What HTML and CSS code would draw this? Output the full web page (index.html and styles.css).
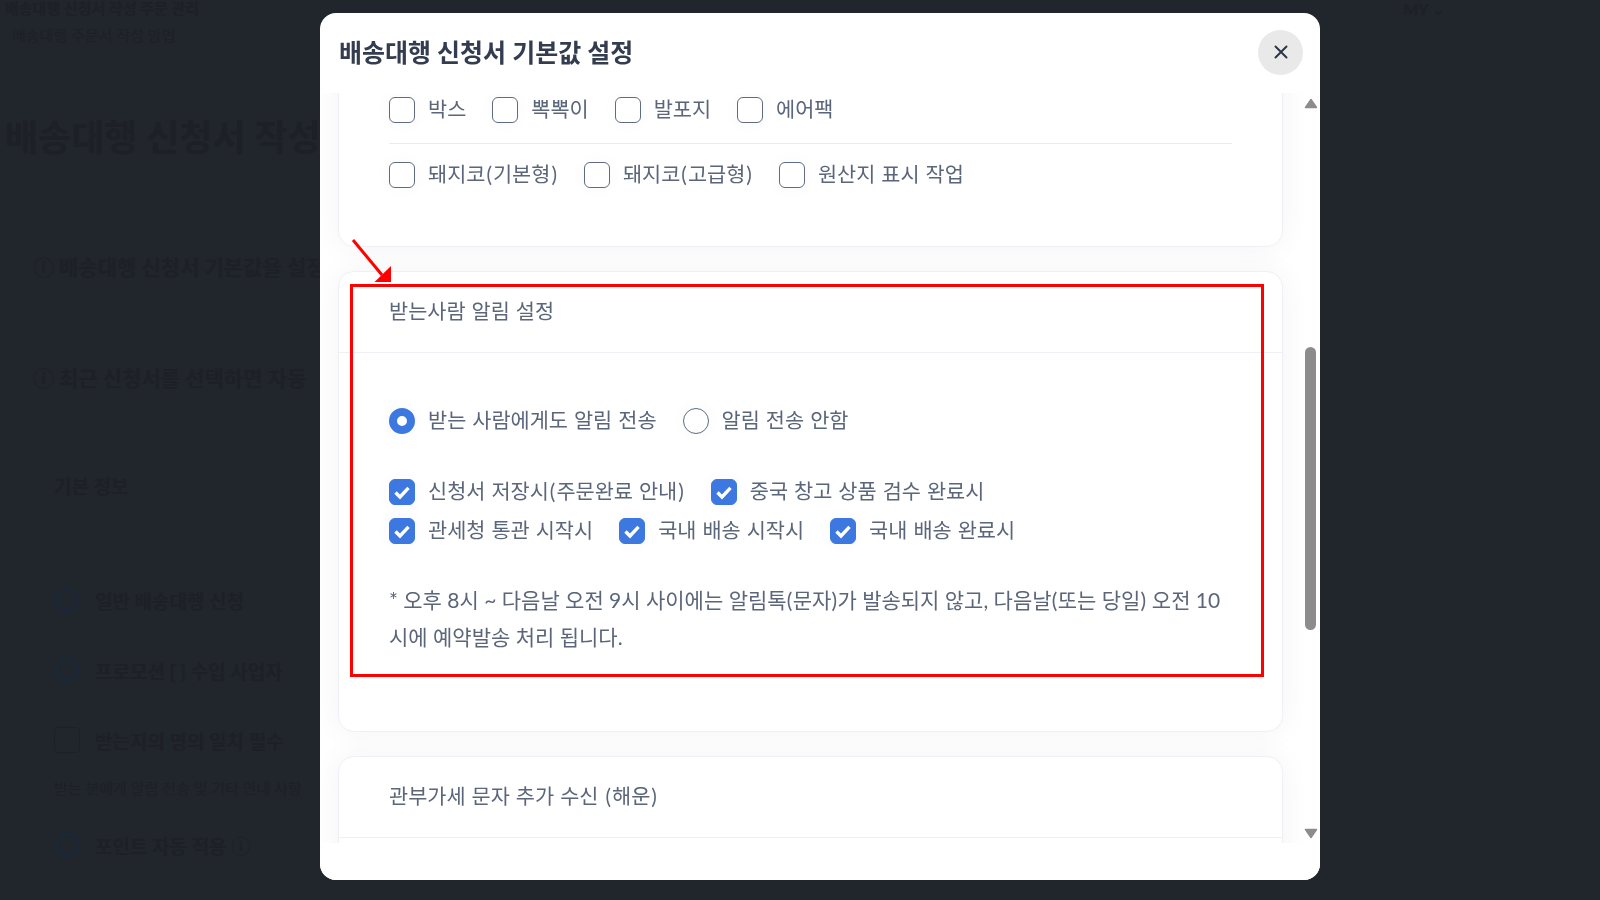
FILE: index.html
```html
<!DOCTYPE html>
<html lang="ko">
<head>
<meta charset="utf-8">
<title>배송대행 신청서 기본값 설정</title>
<link rel="stylesheet" href="styles.css">
</head>
<body>
<div class="page">
  <div class="top-row"><span>배송대행 신청서 작성 주문 관리</span><span class="my">MY ⌄</span></div>
  <div class="top-sub">배송대행 주문서 작성 방법</div>
  <h1 class="page-title">배송대행 신청서 작성</h1>
  <p class="page-line">ⓘ 배송대행 신청서 기본값을 설정</p>
  <p class="page-line second">ⓘ 최근 신청서를 선택하면 자동</p>
  <h2 class="page-heading">기본 정보</h2>
  <div class="page-opt first"><i class="ghost-radio"></i><span>일반 배송대행 신청</span></div>
  <div class="page-opt"><i class="ghost-radio"></i><span>프로모션 [ ] 수입 사업자</span></div>
  <div class="page-opt"><i class="ghost-box"></i><span>받는지의 명의 일치 필수</span></div>
  <div class="page-small">받는 분에게 알림 전송 및 기타 안내 사항</div>
  <div class="page-opt last"><i class="ghost-radio"></i><span>포인트 자동 적용 ⓘ</span></div>
</div>

<div class="overlay">
  <section class="modal">
    <header class="modal-head">
      <h2 class="modal-title">배송대행 신청서 기본값 설정</h2>
      <button class="close" type="button" aria-label="닫기">
        <svg width="16" height="16" viewBox="0 0 16 16"><path d="M2.5 2.5 13.500 13.500M13.500 2.500 2.500 13.500" fill="none" stroke="#2d3748" stroke-width="2" stroke-linecap="round"/></svg>
      </button>
    </header>

    <div class="viewport">
      <div class="card card-cut">
        <div class="options">
          <label class="opt"><i class="box"></i><span>박스</span></label>
          <label class="opt"><i class="box"></i><span>뽁뽁이</span></label>
          <label class="opt"><i class="box"></i><span>발포지</span></label>
          <label class="opt"><i class="box"></i><span>에어팩</span></label>
        </div>
        <hr class="rule">
        <div class="options">
          <label class="opt"><i class="box"></i><span>돼지코<b class="paren">(</b>기본형<b class="paren">)</b></span></label>
          <label class="opt"><i class="box"></i><span>돼지코<b class="paren">(</b>고급형<b class="paren">)</b></span></label>
          <label class="opt"><i class="box"></i><span>원산지 표시 작업</span></label>
        </div>
      </div>

      <div class="card">
        <div class="card-head">받는사람 알림 설정</div>
        <div class="card-body">
          <div class="options">
            <label class="opt"><i class="radio on"></i><span>받는 사람에게도 알림 전송</span></label>
            <label class="opt"><i class="radio"></i><span>알림 전송 안함</span></label>
          </div>
          <div class="options checks">
            <label class="opt"><i class="box on"><svg viewBox="0 0 24 24"><path d="M5.5 12.5 10 17 18.500 7.800"/></svg></i><span>신청서 저장시<b class="paren">(</b>주문완료 안내<b class="paren">)</b></span></label>
            <label class="opt"><i class="box on"><svg viewBox="0 0 24 24"><path d="M5.5 12.5 10 17 18.500 7.800"/></svg></i><span>중국 창고 상품 검수 완료시</span></label>
          </div>
          <div class="options checks-2">
            <label class="opt"><i class="box on"><svg viewBox="0 0 24 24"><path d="M5.5 12.5 10 17 18.500 7.800"/></svg></i><span>관세청 통관 시작시</span></label>
            <label class="opt"><i class="box on"><svg viewBox="0 0 24 24"><path d="M5.5 12.5 10 17 18.500 7.800"/></svg></i><span>국내 배송 시작시</span></label>
            <label class="opt"><i class="box on"><svg viewBox="0 0 24 24"><path d="M5.5 12.5 10 17 18.500 7.800"/></svg></i><span>국내 배송 완료시</span></label>
          </div>
          <p class="note">* 오후 8시 ~ 다음날 오전 9시 사이에는 알림톡<b class="paren">(</b>문자<b class="paren">)</b>가 발송되지 않고, 다음날<b class="paren">(</b>또는 당일<b class="paren">)</b> 오전 10<br>시에 예약발송 처리 됩니다.</p>
        </div>
      </div>

      <div class="card card-last">
        <div class="card-head">관부가세 문자 추가 수신 <b class="paren">(</b>해운<b class="paren">)</b></div>
      </div>

      <div class="scrollbar">
        <svg class="arrow arrow-up" width="14" height="11" viewBox="0 0 14 11"><path d="M7 1.5 12.5 9.5H1.5Z"/></svg>
        <div class="thumb"></div>
        <svg class="arrow arrow-down" width="14" height="11" viewBox="0 0 14 11"><path d="M7 9.5 12.5 1.5H1.5Z"/></svg>
      </div>
    </div>

    <div class="modal-foot"></div>

    <div class="callout"></div>
    <svg class="callout-arrow" width="60" height="60" viewBox="0 0 60 60">
      <path d="M2 3 31 38" fill="none" stroke="#ff0000" stroke-width="3"/>
      <path d="M40 29V45H23.500Z" fill="#ff0000"/>
    </svg>
  </section>
</div>
</body>
</html>
```

FILE: styles.css
```css
* { box-sizing: border-box; }

html, body {
  margin: 0;
  height: 100%;
  overflow: hidden;
}

body {
  background: #21252c;
  font-family: Lato, "Noto Sans CJK KR", sans-serif;
}

/* page dimmed behind the dialog */
.page {
  height: 900px;
  padding: 0 0 0 5px;
  color: #1d2026;
  overflow: hidden;
}
.top-row {
  display: flex;
  justify-content: space-between;
  height: 17px;
  font-size: 15px;
  line-height: 17px;
  font-weight: 700;
  padding-right: 155px;
}
.my { font-size: 16px; }
.top-sub {
  margin: 8px 0 0 7px;
  font-size: 15px;
  line-height: 20px;
}
.page-title {
  margin: 67px 0 0;
  font-size: 36px;
  line-height: 50px;
  font-weight: 700;
  white-space: nowrap;
}
.page-line {
  margin: 90px 0 0 28px;
  font-size: 21px;
  line-height: 30px;
  font-weight: 700;
  white-space: nowrap;
}
.page-line.second { margin-top: 81px; }
.page-heading {
  margin: 79px 0 0 49px;
  font-size: 19px;
  line-height: 30px;
  font-weight: 700;
}
.page-opt {
  display: flex;
  align-items: center;
  gap: 15px;
  height: 26px;
  margin: 44px 0 0 49px;
  font-size: 19px;
  font-weight: 700;
  white-space: nowrap;
}
.page-opt.first { margin-top: 85px; }
.page-small {
  margin: 23px 0 0 49px;
  font-size: 15px;
  line-height: 24px;
  white-space: nowrap;
}
.page-opt.last { margin-top: 32px; }
.ghost-radio { width: 26px; height: 26px; border: 5px solid #1d2733; border-radius: 50%; flex: none; }
.ghost-box { width: 26px; height: 26px; border: 1px solid #1d2026; border-radius: 4px; flex: none; }

/* dialog */
.overlay {
  position: fixed;
  inset: 0;
}
.modal {
  position: absolute;
  left: 320px;
  top: 13px;
  width: 1000px;
  height: 867px;
  display: flex;
  flex-direction: column;
  background: #fff;
  border-radius: 16px;
  overflow: hidden;
}
.modal-head {
  flex: none;
  height: 80px;
  display: flex;
  align-items: center;
  justify-content: space-between;
  padding: 0 17px 2px 19px;
}
.modal-title {
  margin: 0;
  font-size: 25px;
  line-height: 36px;
  font-weight: 700;
  color: #333d4f;
}
.close {
  width: 45px;
  height: 45px;
  padding: 0;
  border: 0;
  border-radius: 50%;
  background: #e9e9e9;
  display: flex;
  align-items: center;
  justify-content: center;
}
.viewport {
  position: relative;
  flex: 1;
  min-height: 0;
  overflow: hidden;
  padding: 0 37px 0 18px;
  display: flex;
  flex-direction: column;
  gap: 24px;
}
.modal-foot {
  flex: none;
  height: 37px;
  background: #fff;
}

.card {
  flex: none;
  background: #fff;
  border: 1px solid #edf0f5;
  border-radius: 16px;
  box-shadow: 0 0 30px rgba(30, 40, 60, 0.05);
}
.card-cut {
  margin-top: -40px;
  padding: 43px 50px 58px 50px;
}
.card-last { height: 200px; }
.rule {
  height: 1px;
  margin: 20px 0 18px;
  border: 0;
  background: #e8ebef;
}
.card-head {
  height: 81px;
  padding: 0 0 4px 50px;
  display: flex;
  align-items: center;
  gap: 0;
  font-size: 20.8px;
  word-spacing: 0.7px;
  color: #5b667a;
  border-bottom: 1px solid #edf0f5;
  white-space: pre-wrap;
}
.card-body {
  height: 378px;
  padding: 55px 50px 0 50px;
}

.paren {
  font-weight: 400;
  margin: 0 1px;
}
.note .paren { margin: 0 0.25px; }

.options {
  display: flex;
  gap: 26px;
  height: 26px;
}
.checks { margin-top: 45px; }
.checks-2 { margin-top: 13px; }
.opt {
  display: flex;
  align-items: flex-start;
  gap: 13px;
  font-size: 20.8px;
  word-spacing: 0.7px;
  line-height: 24px;
  color: #5b667a;
  white-space: nowrap;
}
.box, .radio {
  flex: none;
  display: block;
  width: 26px;
  height: 26px;
  background: #fff;
  border: 1px solid #5f6b80;
  box-shadow: 0 0 16px rgba(30, 40, 60, 0.035);
}
.box { border-radius: 6px; }
.radio { border-radius: 50%; }
.box.on {
  background: #3d78e0;
  border-color: #3d78e0;
}
.box.on svg {
  display: block;
  width: 24px;
  height: 24px;
  fill: none;
  stroke: #fff;
  stroke-width: 3.4;
}
.radio.on {
  background: #fff;
  border: 8px solid #3d78e0;
}
.note {
  margin: 37px 0 0;
  font-size: 21px;
  line-height: 37px;
  color: #5b667a;
  white-space: nowrap;
}

/* scrollbar drawn over the viewport */
.scrollbar {
  position: absolute;
  left: 984px;
  top: 0;
  bottom: 0;
  width: 14px;
}
.arrow {
  position: absolute;
  left: 0;
  fill: #8c8c8c;
  stroke: #8c8c8c;
  stroke-width: 1.5;
  stroke-linejoin: round;
}
.arrow-up { top: 5px; }
.arrow-down { bottom: 4px; }
.thumb {
  position: absolute;
  left: 1px;
  top: 254px;
  width: 11px;
  height: 283px;
  border-radius: 6px;
  background: #8c8c8c;
}

/* annotation */
.callout {
  position: absolute;
  left: 30px;
  top: 271px;
  width: 914px;
  height: 393px;
  border: 3px solid #ff0000;
}
.callout-arrow {
  position: absolute;
  left: 31px;
  top: 224px;
}
```
